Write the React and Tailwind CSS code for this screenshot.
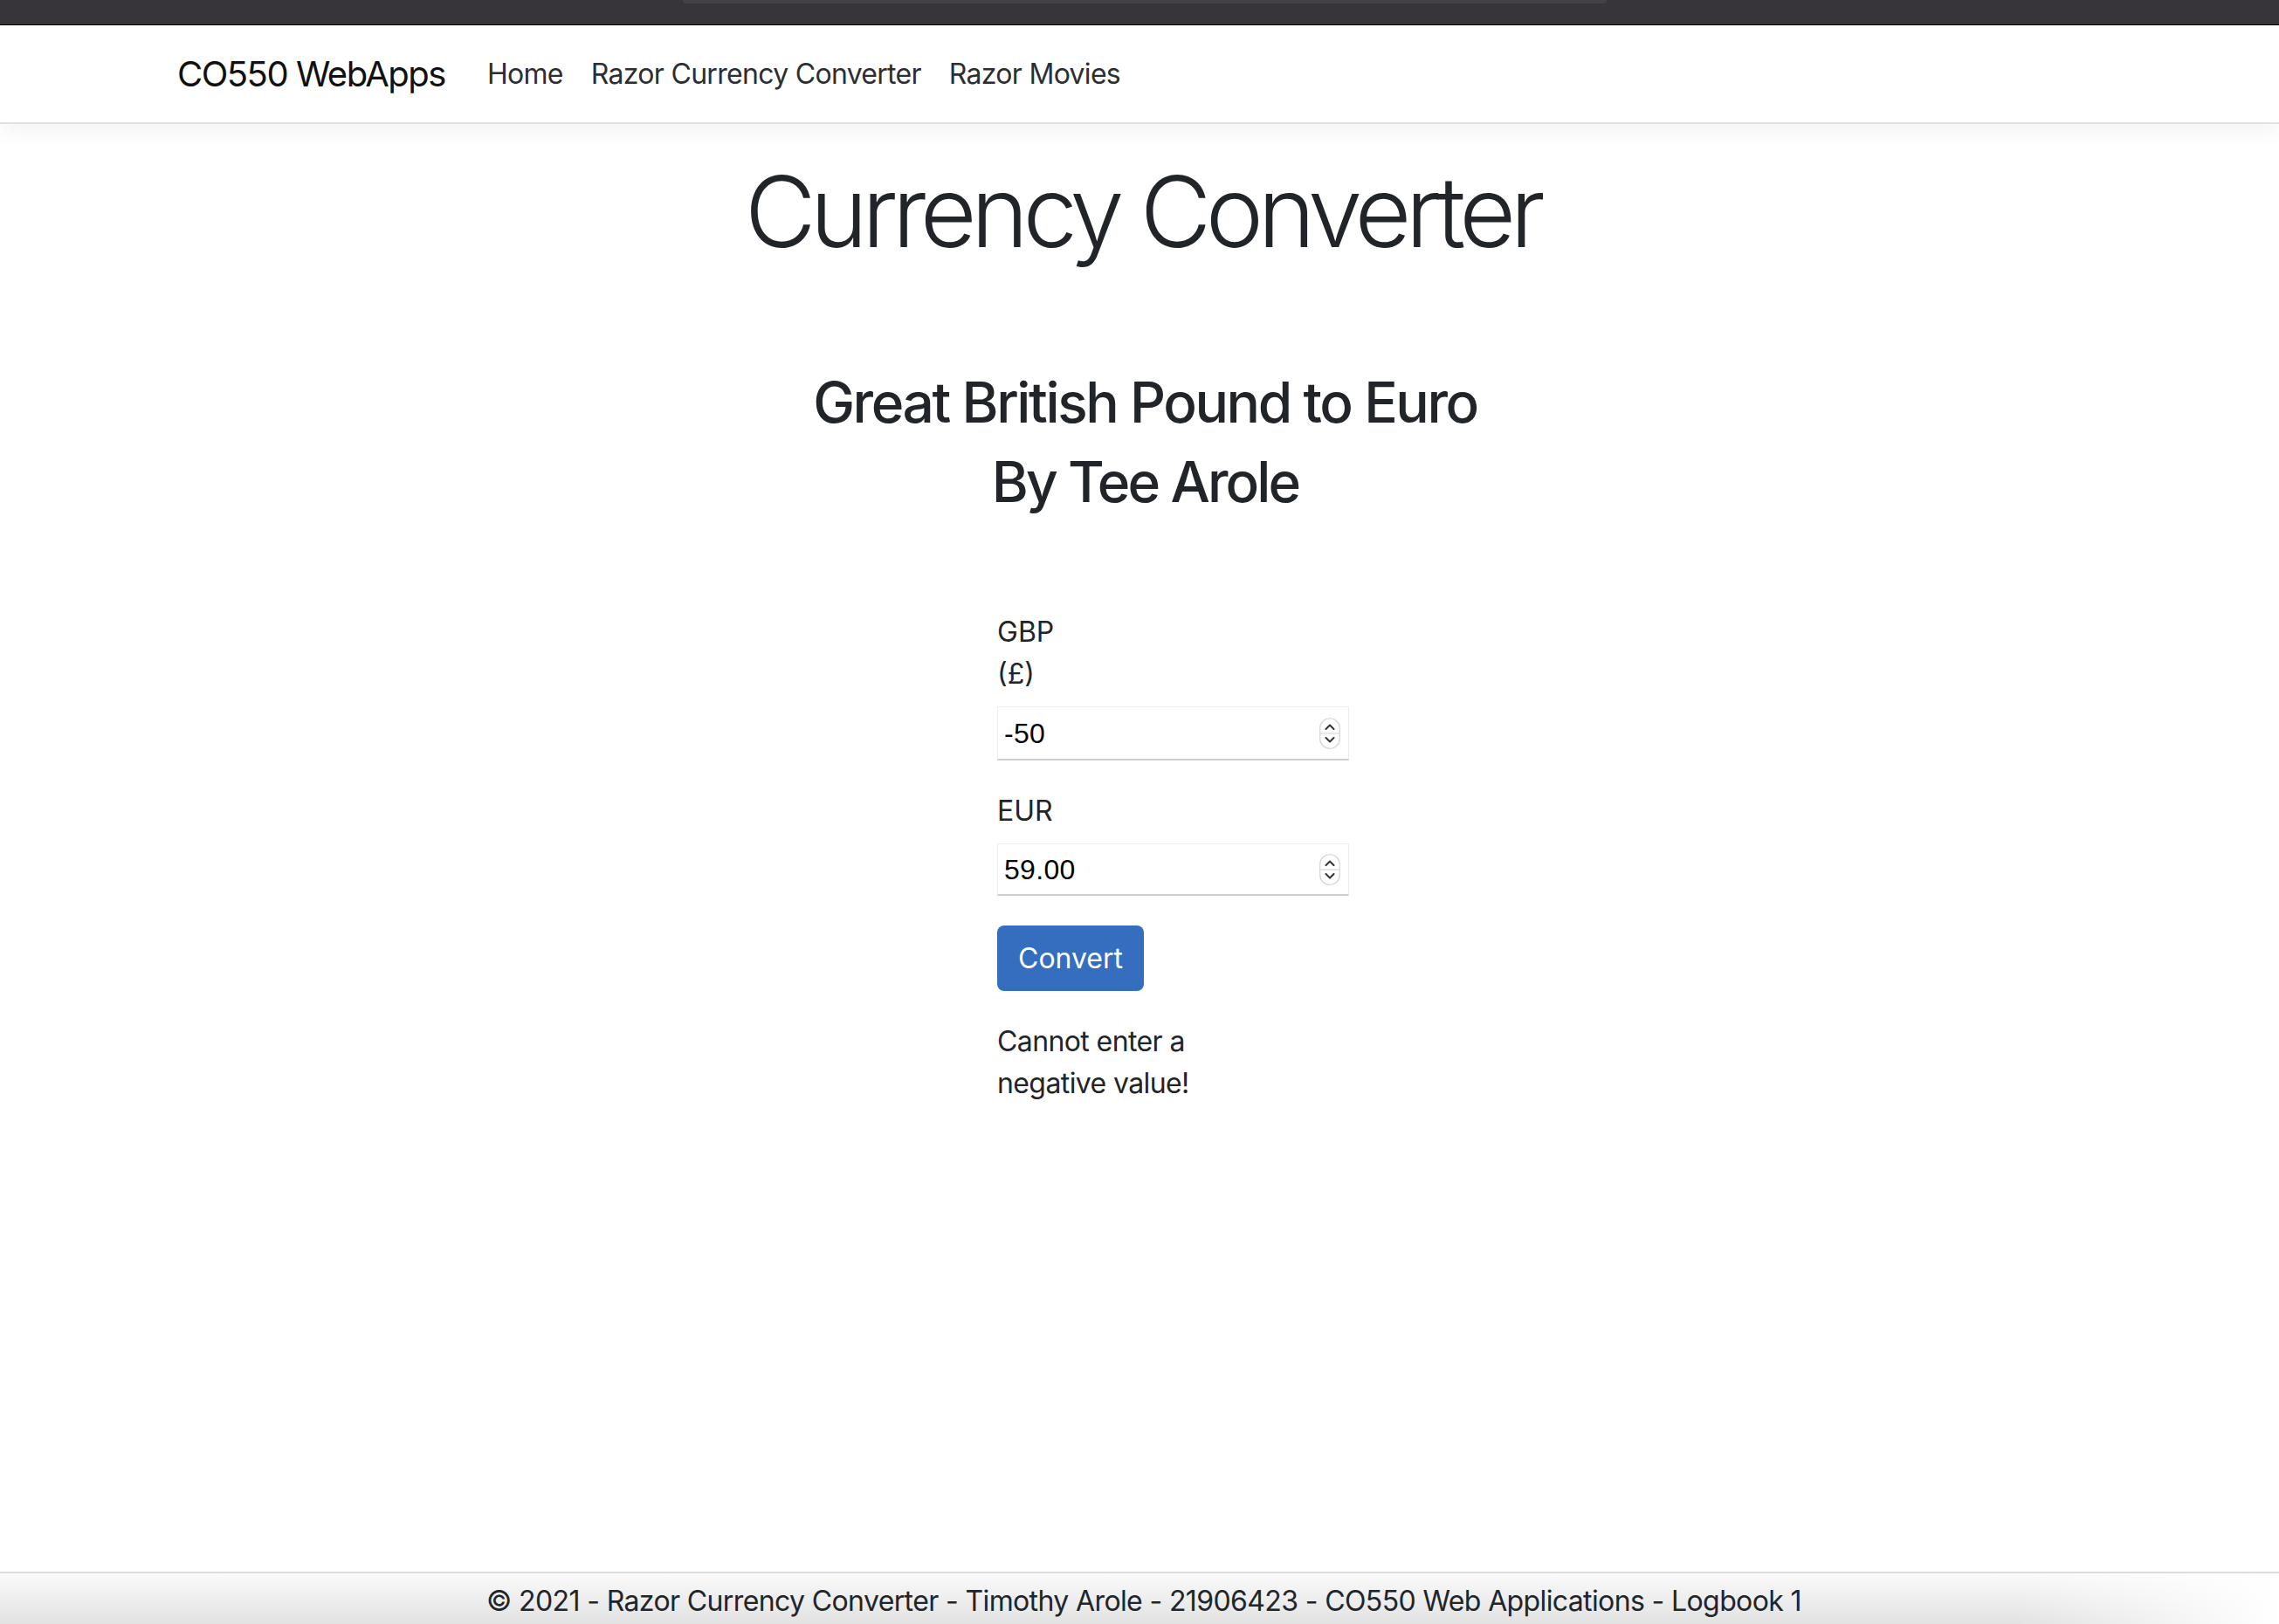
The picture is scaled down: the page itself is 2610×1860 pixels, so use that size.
import React from "react";

function Spinner() {
  return (
    <svg width="24" height="36" viewBox="0 0 24 36" className="shrink-0">
      <rect x="0.75" y="0.75" width="22.5" height="34.5" rx="11" fill="#fff" stroke="#d4d4d4" strokeWidth="1.2" />
      <line x1="1" y1="18" x2="23" y2="18" stroke="#e0e0e0" strokeWidth="1.5" />
      <path d="M7.5 13 L12 8.5 L16.5 13" fill="none" stroke="#333" strokeWidth="2" strokeLinecap="round" strokeLinejoin="round" />
      <path d="M7.5 23 L12 27.5 L16.5 23" fill="none" stroke="#333" strokeWidth="2" strokeLinecap="round" strokeLinejoin="round" />
    </svg>
  );
}

function NumberField({ value, h }) {
  return (
    <div
      className={`flex items-center justify-between w-[403px] ${h} border border-[#ececec] border-b-2 border-b-[#cfcfcf] bg-white pl-[7px] pr-[9px]`}
    >
      <span className="text-[32px] text-black leading-none tracking-[0.3px]" style={{ fontFamily: '"Liberation Sans", Arial, sans-serif' }}>
        {value}
      </span>
      <Spinner />
    </div>
  );
}

export default function App() {
  return (
    <div
      className="h-[1860px] overflow-hidden flex flex-col bg-white text-[#212529]"
      style={{ fontFamily: 'Inter, "Noto Sans", sans-serif' }}
    >
      {/* browser chrome strip */}
      <div className="relative h-[29px] bg-[#373539] border-b border-black shrink-0">
        <div className="absolute left-[782px] top-0 w-[1058px] h-[4px] bg-[#444246] rounded-b-[4px]" />
      </div>

      {/* navbar */}
      <nav className="h-[113px] shrink-0 bg-white border-b-2 border-[#dee2e6] shadow-[0_8px_24px_rgba(0,0,0,0.05)] flex items-center pl-[203px]">
        <span className="text-[40px] text-[#111] mr-[32px] tracking-[-1.5px]">CO550 WebApps</span>
        <a className="text-[32px] text-[#2b2e33] px-[16px] tracking-[-0.7px]">Home</a>
        <a className="text-[32px] text-[#2b2e33] px-[16px] tracking-[-0.7px]">Razor Currency Converter</a>
        <a className="text-[32px] text-[#2b2e33] px-[16px] tracking-[-0.7px]">Razor Movies</a>
      </nav>

      {/* main */}
      <main className="flex-1 flex flex-col">
        <h1 className="mt-[33px] pl-[6px] text-center text-[112px] font-light leading-[134px] tracking-[-6.6px]">
          Currency Converter
        </h1>
        <h2 className="mt-[106px] pl-[13px] text-center text-[64px] font-medium leading-[91px] tracking-[-2.4px]">
          <span className="block">Great British Pound to Euro</span>
          <span className="block tracking-[-2.9px]">By Tee Arole</span>
        </h2>

        <div className="mt-[103px] ml-[1142px] w-[404px] flex flex-col text-[32px] leading-[48px]">
          <label className="flex flex-col">
            <span>GBP</span>
            <span>(£)</span>
          </label>
          <div className="mt-[13px]">
            <NumberField value="-50" h="h-[62px]" />
          </div>
          <label className="mt-[34px]">EUR</label>
          <div className="mt-[13px]">
            <NumberField value="59.00" h="h-[60px]" />
          </div>
          <div className="mt-[34px]">
            <button className="h-[75px] px-[24px] bg-[#356ebe] text-white rounded-[8px] text-[32px] leading-[48px]">
              Convert
            </button>
          </div>
          <p className="mt-[34px] flex flex-col tracking-[-0.6px]">
            <span>Cannot enter a</span>
            <span>negative value!</span>
          </p>
        </div>
      </main>

      {/* footer */}
      <footer className="relative h-[60px] shrink-0 border-t-2 border-[#dcdce0] bg-gradient-to-b from-[#fafafa] to-[#e2e2e2] overflow-hidden">
        <div className="absolute right-0 top-0 h-full w-[300px] bg-gradient-to-r from-transparent to-white" />
        <div className="relative text-center text-[32px] leading-[60px] pt-[2px] pl-[10px] text-[#212529] whitespace-nowrap tracking-[-0.62px]">
          © 2021 - Razor Currency Converter - Timothy Arole - 21906423 - CO550 Web Applications - Logbook 1
        </div>
      </footer>
    </div>
  );
}
